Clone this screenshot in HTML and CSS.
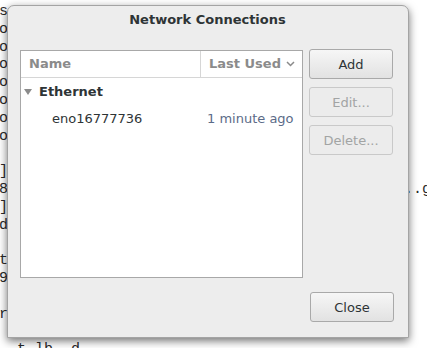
FILE: index.html
```html
<!DOCTYPE html>
<html lang="en">

<head>
    <meta charset="UTF-8">
    <meta name="viewport" content="width=device-width, initial-scale=1.0">
    <title>Network Connections</title>

    <link rel="stylesheet" href="styles.css">
</head>

<body>
    <pre class="term">s
o
o
o
o
o
o
o

]
8                                            ..g
]
d

t
9

r

  t lb  d</pre>

    <div class="dialog">
        <div class="title">Network Connections</div>
        <div class="body">
            <div class="tree">
                <div class="tree_head">
                    <div class="col_name">Name</div>
                    <div class="col_used">Last Used
                        <svg width="9" height="6" viewBox="0 0 9 6"><polyline points="1,1 4.5,4.5 8,1" fill="none" stroke="#8a8a8a" stroke-width="1.5"/></svg>
                    </div>
                </div>
                <div class="row group">
                    <span class="arrow"></span>
                    <span>Ethernet</span>
                </div>
                <div class="row item">
                    <div class="col_name">eno16777736</div>
                    <div class="col_used when">1 minute ago</div>
                </div>
            </div>
            <div class="buttons">
                <button class="btn">Add</button>
                <button class="btn" disabled>Edit...</button>
                <button class="btn" disabled>Delete...</button>
            </div>
        </div>
        <div class="footer">
            <button class="btn">Close</button>
        </div>
    </div>
</body>

</html>
```

FILE: styles.css
```css
body {
    margin: 0;
    width: 427px;
    height: 348px;
    overflow: hidden;
    background-color: white;
    position: relative;
    font-family: "DejaVu Sans", sans-serif;
}

.term {
    margin: 3px 0 0 -1px;
    font-family: "Liberation Mono", monospace;
    font-size: 15px;
    line-height: 17.8px;
    color: #2a2a2a;
}

.dialog {
    position: absolute;
    left: 7px;
    top: 5px;
    width: 375px;
    height: 317px;
    padding: 0 13px 14px 12px;
    background-color: #ededed;
    border: 1px solid #a4a4a4;
    border-radius: 7px 7px 0 0;
    box-shadow: 0 3px 8px rgba(0, 0, 0, 0.55);
    display: flex;
    flex-direction: column;
}

.title {
    height: 44px;
    padding-top: 5px;
    box-sizing: border-box;
    line-height: 18px;
    text-align: center;
    font-size: 13px;
    font-weight: bold;
    color: #2e3436;
}

.body {
    display: flex;
    gap: 6px;
    height: 228px;
}

.tree {
    width: 281px;
    background-color: white;
    border: 1px solid #a8a8a8;
    font-size: 13px;
    color: #2e3436;
}

.tree_head {
    display: flex;
    height: 26px;
    border-bottom: 1px solid #d6d6d6;
    font-weight: bold;
    color: #8b8b8b;
}

.tree_head .col_name {
    width: 180px;
    box-sizing: border-box;
    border-right: 1px solid #d6d6d6;
    padding-left: 8px;
    line-height: 26px;
}

.tree_head .col_used {
    padding-left: 8px;
    line-height: 26px;
    white-space: nowrap;
    display: flex;
    align-items: center;
    gap: 5px;
}

.row {
    height: 27px;
    display: flex;
    align-items: center;
}

.group {
    font-weight: bold;
}

.arrow {
    width: 0;
    height: 0;
    margin: 0 7px 0 3px;
    border-left: 4.5px solid transparent;
    border-right: 4.5px solid transparent;
    border-top: 6px solid #8b8b8b;
}

.item .col_name {
    width: 186px;
    box-sizing: border-box;
    padding-left: 31px;
}

.when {
    color: #5b6b88;
    white-space: nowrap;
}

.buttons {
    display: flex;
    flex-direction: column;
    gap: 8px;
    margin-top: -1px;
}

.btn {
    width: 84px;
    height: 30px;
    font-family: "DejaVu Sans", sans-serif;
    font-size: 13px;
    color: #2e3436;
    background: linear-gradient(#f6f6f6, #e2e2e2);
    border: 1px solid #a9a9a9;
    border-radius: 3px;
    padding: 0;
}

.btn:disabled {
    color: #a2a4a4;
    background: #ececec;
    border-color: #c9c9c9;
}

.footer {
    display: flex;
    justify-content: flex-end;
    margin-top: 14px;
}

.footer .btn {
    margin-right: 1px;
}
```
